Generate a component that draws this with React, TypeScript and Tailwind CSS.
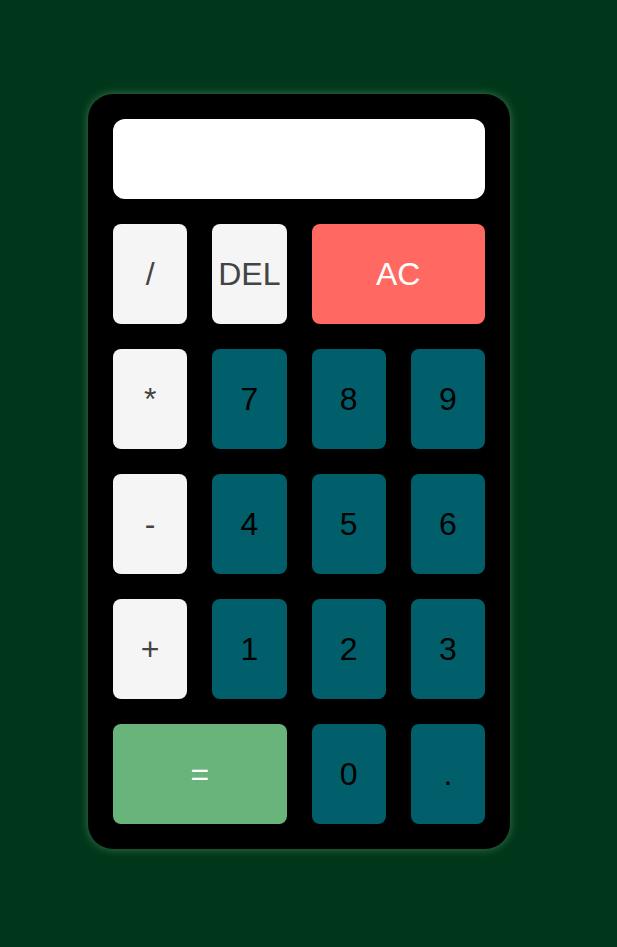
import React from "react";

type Btn = { label: string; kind: "op" | "num" | "clear" | "eq"; span?: number };

const rows: Btn[] = [
  { label: "/", kind: "op" },
  { label: "DEL", kind: "op" },
  { label: "AC", kind: "clear", span: 2 },
  { label: "*", kind: "op" },
  { label: "7", kind: "num" },
  { label: "8", kind: "num" },
  { label: "9", kind: "num" },
  { label: "-", kind: "op" },
  { label: "4", kind: "num" },
  { label: "5", kind: "num" },
  { label: "6", kind: "num" },
  { label: "+", kind: "op" },
  { label: "1", kind: "num" },
  { label: "2", kind: "num" },
  { label: "3", kind: "num" },
  { label: "=", kind: "eq", span: 2 },
  { label: "0", kind: "num" },
  { label: ".", kind: "num" },
];

const styles: Record<Btn["kind"], string> = {
  op: "bg-[#f5f5f5] text-[#444444]",
  num: "bg-[#005f6b] text-black",
  clear: "bg-[#ff6961] text-white",
  eq: "bg-[#68b47a] text-white",
};

export default function App() {
  return (
    <div className="min-h-screen w-full bg-[#00361a] pl-[88px] pt-[94px] font-['Liberation_Sans',Arial,sans-serif]">
      <div className="w-[422px] rounded-[25px] bg-black p-[25px] shadow-[0_0_10px_rgba(120,200,140,0.45)]">
        {/* display */}
        <div className="h-[80px] w-full rounded-[12px] bg-white" />
        <div className="mt-[25px] grid grid-cols-4 gap-[25px]">
          {rows.map((b, i) => (
            <button
              key={i}
              className={`flex h-[100px] items-center justify-center rounded-[8px] text-[32px] leading-none ${styles[b.kind]} ${b.span === 2 ? "col-span-2" : ""}`}
            >
              {b.label}
            </button>
          ))}
        </div>
      </div>
    </div>
  );
}
